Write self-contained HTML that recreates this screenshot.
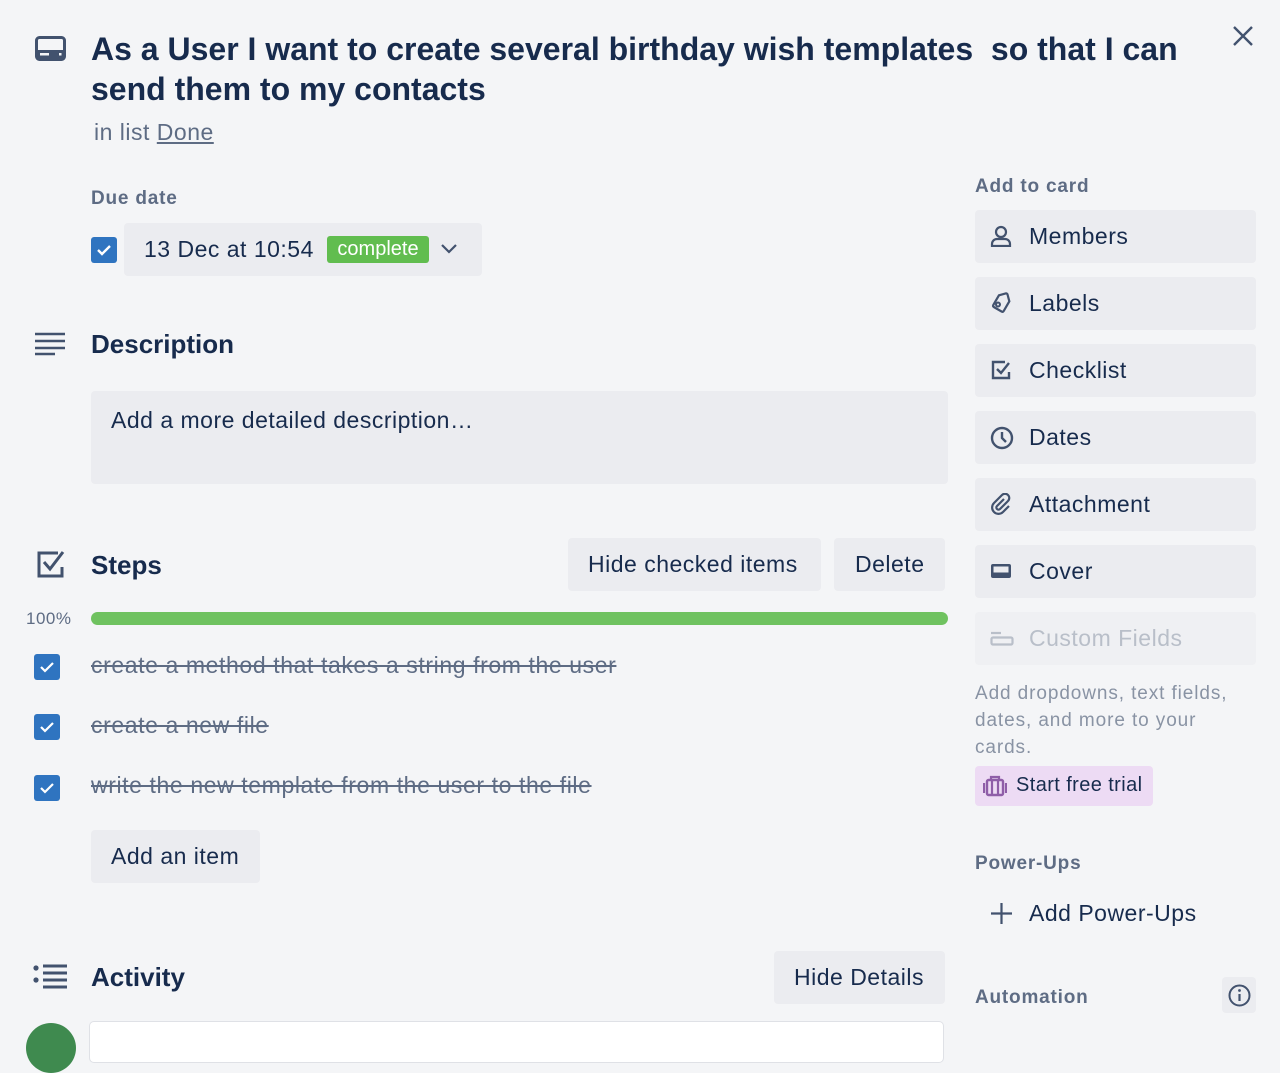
<!DOCTYPE html>
<html><head><meta charset="utf-8"><style>
*{margin:0;padding:0;box-sizing:border-box}
body{width:1280px;height:1034px;overflow:hidden;background:#f4f5f7;font-family:"Liberation Sans",sans-serif;color:#172b4d;position:relative}
.a{position:absolute;white-space:nowrap}
.t{font-size:23px;letter-spacing:0.5px}
.btn{position:absolute;background:#ebecf0;border-radius:4px}
.sb{left:975px;width:281px;height:53px}
.sb span{position:absolute;left:54px;top:13px;font-size:23px;letter-spacing:0.5px;line-height:27px}
.sb svg{position:absolute;left:15px;top:15px}
.cb{position:absolute;width:26px;height:26px;background:#2f74c0;border-radius:3px}
.cb svg{position:absolute;left:5px;top:5px}
.st{font-size:23px;letter-spacing:0.6px;color:#5e6c84;text-decoration:line-through}
h2{font-size:26px;font-weight:bold}
.lbl{font-size:19px;font-weight:bold;color:#5e6c84;letter-spacing:0.8px}
</style></head><body>
<svg class="a" style="left:35px;top:36px" width="31" height="25" viewBox="0 0 31 25"><rect x="1.5" y="1.5" width="28" height="22" rx="3" fill="none" stroke="#42526e" stroke-width="3"/><rect x="1.5" y="14" width="28" height="9" fill="#42526e"/><rect x="5" y="17" width="9" height="2.5" fill="#f4f5f7"/><rect x="24" y="17" width="2.5" height="2.5" fill="#f4f5f7"/></svg>
<div class="a" style="left:91px;top:29px;font-size:32px;font-weight:bold;line-height:40px">As a User I want to create several birthday wish templates&nbsp; so that I can<br>send them to my contacts</div>
<svg class="a" style="left:1232px;top:25px" width="22" height="22" viewBox="0 0 22 22"><path d="M2 2L20 20M20 2L2 20" stroke="#42526e" stroke-width="2.4"/></svg>
<div class="a t" style="left:94px;top:119px;color:#5e6c84">in list <u>Done</u></div>
<div class="a lbl" style="left:91px;top:188px">Due date</div>
<div class="cb" style="left:91px;top:237px"><svg width="16" height="16" viewBox="0 0 16 16"><path d="M2 8l4 4 8-8" fill="none" stroke="#fff" stroke-width="2.4"/></svg></div>
<div class="btn" style="left:124px;top:223px;width:358px;height:53px"></div>
<div class="a t" style="left:144px;top:236px">13 Dec at 10:54</div>
<div class="a" style="left:327px;top:236px;width:102px;height:27px;background:#61bd4f;border-radius:3px;color:#fff;font-size:20px;text-align:center;line-height:27px">complete</div>
<svg class="a" style="left:440px;top:243px" width="18" height="12" viewBox="0 0 18 12"><path d="M2 2l7 7 7-7" fill="none" stroke="#42526e" stroke-width="2.2"/></svg>
<svg class="a" style="left:35px;top:332px" width="31" height="24" viewBox="0 0 31 24"><path d="M0 2h30M0 9h30M0 16h30M0 22h20" stroke="#42526e" stroke-width="2.6"/></svg>
<h2 class="a" style="left:91px;top:329px">Description</h2>
<div class="btn" style="left:91px;top:391px;width:857px;height:93px"></div>
<div class="a t" style="left:111px;top:407px">Add a more detailed description…</div>
<svg class="a" style="left:36px;top:550px" width="30" height="28" viewBox="0 0 30 28"><path d="M22 3H3v23h23v-9" fill="none" stroke="#42526e" stroke-width="3"/><path d="M8 12l6 7 13-17" fill="none" stroke="#42526e" stroke-width="3"/></svg>
<h2 class="a" style="left:91px;top:550px">Steps</h2>
<div class="btn" style="left:568px;top:538px;width:253px;height:53px"></div>
<div class="a t" style="left:588px;top:551px">Hide checked items</div>
<div class="btn" style="left:834px;top:538px;width:111px;height:53px"></div>
<div class="a t" style="left:855px;top:551px">Delete</div>
<div class="a" style="left:26px;top:609px;font-size:17px;letter-spacing:0.5px;color:#5e6c84">100%</div>
<div class="a" style="left:91px;top:612px;width:857px;height:13px;background:#61bd4f;border-radius:7px;opacity:.9"></div>
<div class="cb" style="left:34px;top:654px"><svg width="16" height="16" viewBox="0 0 16 16"><path d="M2 8l4 4 8-8" fill="none" stroke="#fff" stroke-width="2.2"/></svg></div>
<div class="a st" style="left:91px;top:652px">create a method that takes a string from the user</div>
<div class="cb" style="left:34px;top:714px"><svg width="16" height="16" viewBox="0 0 16 16"><path d="M2 8l4 4 8-8" fill="none" stroke="#fff" stroke-width="2.2"/></svg></div>
<div class="a st" style="left:91px;top:712px">create a new file</div>
<div class="cb" style="left:34px;top:775px"><svg width="16" height="16" viewBox="0 0 16 16"><path d="M2 8l4 4 8-8" fill="none" stroke="#fff" stroke-width="2.2"/></svg></div>
<div class="a st" style="left:91px;top:772px">write the new template from the user to the file</div>
<div class="btn" style="left:91px;top:830px;width:169px;height:53px"></div>
<div class="a t" style="left:111px;top:843px">Add an item</div>
<svg class="a" style="left:33px;top:964px" width="34" height="25" viewBox="0 0 34 25"><circle cx="3" cy="4" r="2.6" fill="#42526e"/><circle cx="3" cy="16" r="2.6" fill="#42526e"/><path d="M10 2h24M10 9h24M10 16h24M10 23h24" stroke="#42526e" stroke-width="3"/></svg>
<h2 class="a" style="left:91px;top:962px">Activity</h2>
<div class="btn" style="left:774px;top:951px;width:171px;height:53px"></div>
<div class="a t" style="left:794px;top:964px">Hide Details</div>
<div class="a" style="left:26px;top:1023px;width:50px;height:50px;border-radius:50%;background:#3f8a4f"></div>
<div class="a" style="left:90px;top:1022px;width:853px;height:40px;background:#fff;border-radius:4px;box-shadow:0 0 0 1px #dfe1e6"></div>

<div class="a lbl" style="left:975px;top:176px">Add to card</div>
<div class="btn sb" style="top:210px"><svg width="22" height="22" viewBox="0 0 22 22"><circle cx="11" cy="7" r="5" fill="none" stroke="#42526e" stroke-width="2.2"/><path d="M2 21v-2a5 5 0 015-5h8a5 5 0 015 5v2z" fill="none" stroke="#42526e" stroke-width="2.2"/></svg><span>Members</span></div>
<div class="btn sb" style="top:277px"><svg width="22" height="22" viewBox="0 0 22 22"><path d="M11 3h7a1.5 1.5 0 011.5 1.5v7l-8 8a1.5 1.5 0 01-2 0l-6.5-6.5a1.5 1.5 0 010-2z" transform="rotate(-15 11 11)" fill="none" stroke="#42526e" stroke-width="2.2"/><circle cx="8" cy="12.5" r="2" fill="none" stroke="#42526e" stroke-width="2"/></svg><span>Labels</span></div>
<div class="btn sb" style="top:344px"><svg width="22" height="22" viewBox="0 0 22 22"><path d="M15 3H3v16h16v-6" fill="none" stroke="#42526e" stroke-width="2.4"/><path d="M7 10l4 4 8-10" fill="none" stroke="#42526e" stroke-width="2.4"/></svg><span>Checklist</span></div>
<div class="btn sb" style="top:411px"><svg width="24" height="24" viewBox="0 0 24 24"><circle cx="12" cy="12" r="10" fill="none" stroke="#42526e" stroke-width="2.4"/><path d="M12 6v6l4 4" fill="none" stroke="#42526e" stroke-width="2.4"/></svg><span>Dates</span></div>
<div class="btn sb" style="top:478px"><svg width="22" height="22" viewBox="0 0 22 22"><path d="M14 6l-7 7a2 2 0 003 3l8-8a4 4 0 00-6-6l-8 8a6 6 0 009 9l6-6" fill="none" stroke="#42526e" stroke-width="2.2"/></svg><span>Attachment</span></div>
<div class="btn sb" style="top:545px"><svg width="22" height="22" viewBox="0 0 22 22"><rect x="1" y="4" width="20" height="14" rx="2" fill="#42526e"/><rect x="3.5" y="6.5" width="15" height="6" fill="#ebecf0"/></svg><span>Cover</span></div>
<div class="btn sb" style="top:612px;opacity:.55"><svg width="24" height="22" viewBox="0 0 24 22"><path d="M1 6h10" stroke="#8993a4" stroke-width="2.2"/><rect x="1.5" y="10.5" width="21" height="7" rx="1.5" fill="none" stroke="#8993a4" stroke-width="2.2"/></svg><span style="color:#8993a4">Custom Fields</span></div>
<div class="a" style="left:975px;top:680px;font-size:19px;letter-spacing:0.9px;line-height:27px;color:#8993a4">Add dropdowns, text fields,<br>dates, and more to your<br>cards.</div>
<div class="a" style="left:975px;top:766px;width:178px;height:40px;background:#eddbf4;border-radius:4px"></div>
<svg class="a" style="left:983px;top:775px" width="24" height="22" viewBox="0 0 24 22"><rect x="4" y="5" width="16" height="15" rx="1.5" fill="none" stroke="#8f5ea8" stroke-width="2.4"/><path d="M8 5V2h8v3M9 5v15M15 5v15M1 8v10M23 8v10" fill="none" stroke="#8f5ea8" stroke-width="2.2"/></svg>
<div class="a" style="left:1016px;top:774px;font-size:20px;letter-spacing:0.4px">Start free trial</div>
<div class="a lbl" style="left:975px;top:853px">Power-Ups</div>
<svg class="a" style="left:991px;top:903px" width="21" height="21" viewBox="0 0 21 21"><path d="M10.5 0v21M0 10.5h21" stroke="#42526e" stroke-width="2.2"/></svg>
<div class="a t" style="left:1029px;top:900px">Add Power-Ups</div>
<div class="a lbl" style="left:975px;top:987px">Automation</div>
<div class="btn" style="left:1222px;top:977px;width:34px;height:36px"></div>
<svg class="a" style="left:1228px;top:984px" width="23" height="23" viewBox="0 0 23 23"><circle cx="11.5" cy="11.5" r="10" fill="none" stroke="#42526e" stroke-width="2"/><path d="M11.5 10v7" stroke="#42526e" stroke-width="2.2"/><circle cx="11.5" cy="6.5" r="1.4" fill="#42526e"/></svg>
</body></html>
